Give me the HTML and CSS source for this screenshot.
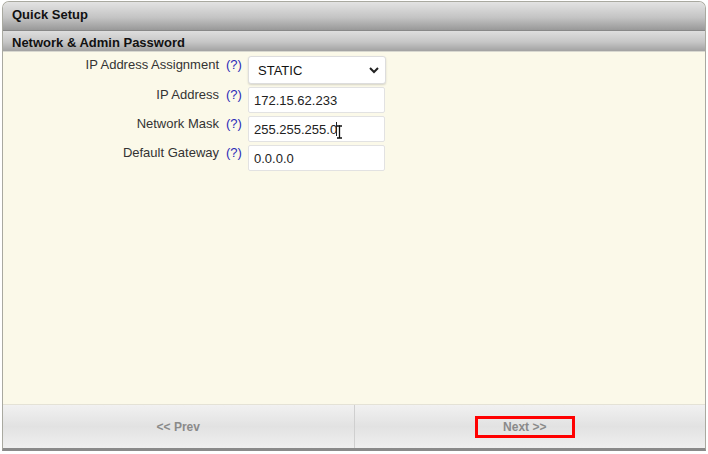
FILE: index.html
```html
<!DOCTYPE html>
<html lang="en">
<head>
    <meta charset="UTF-8">
    <title>Quick Setup</title>
    <link rel="stylesheet" href="styles.css">
</head>
<body>
    <div class="wizard">
        <div class="wizard-title">Quick Setup</div>
        <div class="section-title">Network &amp; Admin Password</div>

        <div class="content">
            <div class="form">
                <label class="field-label first">IP Address Assignment</label>
                <a class="help first">(?)</a>
                <div class="select-box">
                    <span>STATIC</span>
                    <svg width="12" height="8" viewBox="0 0 12 8" fill="none" stroke="#222" stroke-width="2">
                        <polyline points="2,2 6,6 10,2"></polyline>
                    </svg>
                </div>

                <label class="field-label">IP Address</label>
                <a class="help">(?)</a>
                <input class="text-input" type="text" value="172.15.62.233">

                <label class="field-label">Network Mask</label>
                <a class="help">(?)</a>
                <div class="input-wrap">
                    <input class="text-input" type="text" value="255.255.255.0">
                    <span class="caret"></span>
                    <svg class="ibeam" width="7" height="14" viewBox="0 0 7 14" fill="none" stroke="#111" stroke-width="1.3">
                        <path d="M1 1h2l.5.5L4 1h2M3.5 1.5v11M1 13h2l.5-.5.5.5h2"></path>
                    </svg>
                </div>

                <label class="field-label">Default Gateway</label>
                <a class="help">(?)</a>
                <input class="text-input" type="text" value="0.0.0.0">
            </div>
        </div>

        <div class="footer">
            <button class="nav-btn">&lt;&lt; Prev</button>
            <button class="nav-btn"><span class="highlight">Next &gt;&gt;</span></button>
        </div>
    </div>
</body>
</html>
```

FILE: styles.css
```css
* {
    margin: 0;
    padding: 0;
    box-sizing: border-box;
}

body {
    font-family: "Liberation Sans", Arial, sans-serif;
    background: #fff;
    padding: 1px 2px 0 2px;
}

.wizard {
    width: 704px;
    height: 450px;
    display: flex;
    flex-direction: column;
    border: 1px solid #a9a9a0;
    border-bottom: 3px solid #8a8a8a;
    border-radius: 7px 7px 0 0;
    overflow: hidden;
    background: #fbf9e9;
}

/* Header bars */
.wizard-title {
    height: 29px;
    padding: 5px 9px 0;
    font-size: 13px;
    font-weight: bold;
    color: #111;
    background: linear-gradient(#e3e3e3, #c4c4c4 55%, #999);
    border-bottom: 1px solid #888;
}

.section-title {
    height: 21px;
    padding: 4px 9px 0;
    font-size: 13px;
    font-weight: bold;
    color: #111;
    background: linear-gradient(#dedede, #c6c6c6 55%, #a2a2a2);
    border-bottom: 1px solid #d8d8d0;
}

/* Form */
.content {
    flex: 1;
    padding-top: 4px;
}

.form {
    display: grid;
    grid-template-columns: 216px 15px 138px;
    column-gap: 7px;
    row-gap: 3px;
    align-items: start;
}

.field-label {
    font-size: 13px;
    line-height: 15px;
    color: #333;
    text-align: right;
}

.field-label.first {
    padding-top: 1px;
}

.help {
    font-size: 13px;
    line-height: 15px;
    color: #2c2cb8;
    white-space: nowrap;
}

.help.first {
    padding-top: 1px;
}

.select-box {
    height: 28px;
    width: 138px;
    display: flex;
    align-items: center;
    justify-content: space-between;
    padding: 0 5px 0 9px;
    font-size: 13px;
    color: #111;
    background: #fff;
    border: 1px solid #ddd;
    border-radius: 3px;
    box-shadow: 0 1px 2px rgba(0, 0, 0, 0.15);
}

.text-input {
    width: 137px;
    height: 26px;
    padding: 0 5px;
    font-family: "Liberation Sans", Arial, sans-serif;
    font-size: 13px;
    color: #222;
    background: #fff;
    border: 1px solid #e2e2e2;
    border-radius: 2px;
    outline: none;
}

.input-wrap {
    position: relative;
    height: 26px;
}

.caret {
    position: absolute;
    left: 88px;
    top: 6px;
    width: 1px;
    height: 14px;
    background: #222;
}

.ibeam {
    position: absolute;
    left: 88px;
    top: 9px;
}

/* Footer buttons */
.footer {
    height: 44px;
    display: flex;
    border-top: 1px solid #e4e2d6;
}

.nav-btn {
    flex: 1;
    display: flex;
    align-items: center;
    justify-content: center;
    font-family: "Liberation Sans", Arial, sans-serif;
    font-size: 12px;
    font-weight: bold;
    color: #8a8a8a;
    background: linear-gradient(#f1f1f1, #e2e2e2 50%, #efefef);
    border: none;
}

.nav-btn + .nav-btn {
    border-left: 1px solid #cfcfcf;
}

.highlight {
    display: inline-block;
    width: 100px;
    height: 22px;
    margin-right: 10px;
    line-height: 16px;
    text-align: center;
    border: 3px solid #f00;
}
```
